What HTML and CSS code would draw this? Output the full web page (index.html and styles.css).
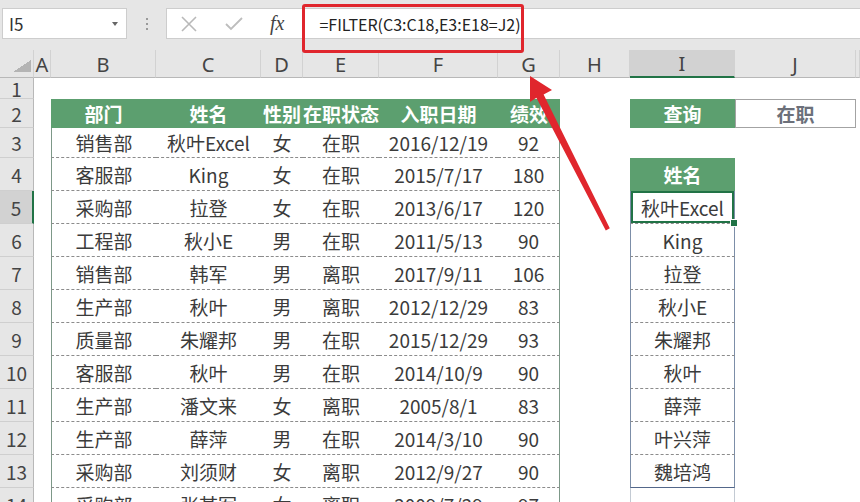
FILE: index.html
```html
<!DOCTYPE html>
<html lang="zh-CN">
<head>
  <meta charset="UTF-8">
  <title>FILTER</title>
  <link rel="stylesheet" href="styles.css">
</head>
<body>
  <div class="toolbar">
    <div class="namebox"><span class="name">I5</span><span class="caret"></span></div>
    <div class="grip"><i></i><i></i><i></i></div>
    <div class="fbar">
      <svg class="ico cancel" width="20" height="16" viewBox="0 0 20 16"><path d="M3 1 L17 15 M17 1 L3 15" stroke="#b9b9b9" stroke-width="1.6" fill="none"/></svg>
      <svg class="ico check" width="18" height="14" viewBox="0 0 18 14"><path d="M1 7 L6 12 L17 1" stroke="#bdbdbd" stroke-width="1.8" fill="none"/></svg>
      <span class="fx">fx</span>
      <span class="formula">=FILTER(C3:C18,E3:E18=J2)</span>
    </div>
  </div>

  <table class="sheet">
    <colgroup>
      <col class="w-rh"><col class="w-a"><col class="w-b"><col class="w-c"><col class="w-d"><col class="w-e"><col class="w-f"><col class="w-g"><col class="w-h"><col class="w-i"><col class="w-j"><col class="w-k">
    </colgroup>
    <tr class="hdr">
      <td class="corner"><span class="tri"></span></td>
      <td>A</td><td>B</td><td>C</td><td>D</td><td>E</td><td>F</td><td>G</td><td>H</td><td class="on">I</td><td>J</td><td></td>
    </tr>
    <tr class="r1">
      <td class="rh">1</td><td></td><td></td><td></td><td></td><td></td><td></td><td></td><td></td><td></td><td></td><td></td>
    </tr>
    <tr class="r2">
      <td class="rh">2</td><td></td>
      <td class="gh">部门</td><td class="gh">姓名</td><td class="gh">性别</td><td class="gh">在职状态</td><td class="gh">入职日期</td><td class="gh">绩效</td>
      <td></td><td class="gh">查询</td><td class="qv">在职</td><td></td>
    </tr>
    <tr class="r3">
      <td class="rh">3</td><td></td>
      <td class="d first">销售部</td><td class="d">秋叶Excel</td><td class="d">女</td><td class="d">在职</td><td class="d">2016/12/19</td><td class="d last">92</td>
      <td></td><td></td><td></td><td></td>
    </tr>
    <tr class="rn">
      <td class="rh">4</td><td></td>
      <td class="d first">客服部</td><td class="d">King</td><td class="d">女</td><td class="d">在职</td><td class="d">2015/7/17</td><td class="d last">180</td>
      <td></td><td class="gh">姓名</td><td></td><td></td>
    </tr>
    <tr class="rn">
      <td class="rh cur">5</td><td></td>
      <td class="d first">采购部</td><td class="d">拉登</td><td class="d">女</td><td class="d">在职</td><td class="d">2013/6/17</td><td class="d last">120</td>
      <td></td><td class="li sel">秋叶Excel</td><td></td><td></td>
    </tr>
    <tr class="rn">
      <td class="rh">6</td><td></td>
      <td class="d first">工程部</td><td class="d">秋小E</td><td class="d">男</td><td class="d">在职</td><td class="d">2011/5/13</td><td class="d last">90</td>
      <td></td><td class="li">King</td><td></td><td></td>
    </tr>
    <tr class="rn">
      <td class="rh">7</td><td></td>
      <td class="d first">销售部</td><td class="d">韩军</td><td class="d">男</td><td class="d">离职</td><td class="d">2017/9/11</td><td class="d last">106</td>
      <td></td><td class="li">拉登</td><td></td><td></td>
    </tr>
    <tr class="rn">
      <td class="rh">8</td><td></td>
      <td class="d first">生产部</td><td class="d">秋叶</td><td class="d">男</td><td class="d">离职</td><td class="d">2012/12/29</td><td class="d last">83</td>
      <td></td><td class="li">秋小E</td><td></td><td></td>
    </tr>
    <tr class="rn">
      <td class="rh">9</td><td></td>
      <td class="d first">质量部</td><td class="d">朱耀邦</td><td class="d">男</td><td class="d">在职</td><td class="d">2015/12/29</td><td class="d last">93</td>
      <td></td><td class="li">朱耀邦</td><td></td><td></td>
    </tr>
    <tr class="rn">
      <td class="rh">10</td><td></td>
      <td class="d first">客服部</td><td class="d">秋叶</td><td class="d">男</td><td class="d">在职</td><td class="d">2014/10/9</td><td class="d last">90</td>
      <td></td><td class="li">秋叶</td><td></td><td></td>
    </tr>
    <tr class="rn">
      <td class="rh">11</td><td></td>
      <td class="d first">生产部</td><td class="d">潘文来</td><td class="d">女</td><td class="d">离职</td><td class="d">2005/8/1</td><td class="d last">83</td>
      <td></td><td class="li">薛萍</td><td></td><td></td>
    </tr>
    <tr class="rn">
      <td class="rh">12</td><td></td>
      <td class="d first">生产部</td><td class="d">薛萍</td><td class="d">男</td><td class="d">在职</td><td class="d">2014/3/10</td><td class="d last">90</td>
      <td></td><td class="li">叶兴萍</td><td></td><td></td>
    </tr>
    <tr class="rn">
      <td class="rh">13</td><td></td>
      <td class="d first">采购部</td><td class="d">刘须财</td><td class="d">女</td><td class="d">离职</td><td class="d">2012/9/27</td><td class="d last">90</td>
      <td></td><td class="li end">魏培鸿</td><td></td><td></td>
    </tr>
    <tr class="rn">
      <td class="rh">14</td><td></td>
      <td class="d first">采购部</td><td class="d">张某军</td><td class="d">女</td><td class="d">离职</td><td class="d">2009/7/29</td><td class="d last">97</td>
      <td></td><td class="tail"></td><td></td><td></td>
    </tr>
  </table>

  <!-- annotations drawn over the sheet -->
  <div class="callout"></div>
  <svg class="arrow" width="860" height="502" viewBox="0 0 860 502">
    <polygon points="530,76 552,90 543.6,94.6 609.8,228.2 605.8,230.4 536.4,97.8 530,102" fill="#e0262d"/>
  </svg>
</body>
</html>
```

FILE: styles.css
```css
html, body {
  margin: 0;
  height: 100%;
  overflow: hidden;
  background-color: #ffffff;
}
body {
  position: relative;
  font-family: "Noto Sans CJK SC", sans-serif;
}

/* formula bar */
.toolbar {
  display: flex;
  align-items: flex-start;
  height: 50px;
  padding-top: 8px;
  box-sizing: border-box;
  background-color: #e6e6e6;
}
.namebox {
  display: flex;
  align-items: center;
  justify-content: space-between;
  width: 125px;
  height: 31px;
  margin-left: 2px;
  box-sizing: border-box;
  padding: 0 8px 0 6px;
  background-color: #fff;
  border: 1px solid #cdcdcd;
}
.name {
  font-size: 17px;
  color: #333;
}
.caret {
  width: 0;
  height: 0;
  border-left: 3px solid transparent;
  border-right: 3px solid transparent;
  border-top: 4px solid #666;
}
.grip {
  display: flex;
  flex-direction: column;
  gap: 3px;
  width: 39px;
  height: 31px;
  align-items: center;
  justify-content: center;
}
.grip i {
  width: 2px;
  height: 2px;
  background-color: #9a9a9a;
}
.fbar {
  flex: 1;
  display: flex;
  align-items: center;
  height: 31px;
  box-sizing: border-box;
  padding-left: 12px;
  background-color: #fff;
  border: 1px solid #cdcdcd;
  border-right: none;
}
.ico {
  display: block;
}
.cancel {
  margin-right: 26px;
}
.check {
  margin-right: 27px;
}
.fx {
  font-family: "Liberation Serif", serif;
  font-style: italic;
  font-size: 20px;
  color: #444;
  margin-right: 35px;
}
.formula {
  font-size: 16px;
  color: #222;
}

/* sheet */
.sheet {
  border-collapse: separate;
  border-spacing: 0;
  table-layout: fixed;
  width: 860px;
  font-size: 19px;
  color: #3b3b3b;
}
.sheet td {
  padding: 0;
  text-align: center;
  white-space: nowrap;
  overflow: hidden;
  line-height: 1;
}
.w-rh { width: 34px; }
.w-a { width: 17px; }
.w-b { width: 105px; }
.w-c { width: 105px; }
.w-d { width: 42px; }
.w-e { width: 76px; }
.w-f { width: 119px; }
.w-g { width: 62px; }
.w-h { width: 70px; }
.w-i { width: 105px; }
.w-j { width: 121px; }
.w-k { width: 4px; }

.hdr { height: 28px; }
.r1 { height: 21px; }
.r2 { height: 29px; }
.r3 { height: 30px; }
.rn { height: 33px; }

.hdr td {
  background-color: #e6e6e6;
  border-right: 1px solid #d2d2d2;
  border-bottom: 1px solid #b8b8b8;
  color: #444;
  font-size: 20px;
  font-family: "Noto Sans", sans-serif;
  vertical-align: bottom;
  padding-bottom: 2px;
}
.hdr td.on {
  background-color: #d2d2d2;
  border-bottom: 2px solid #217346;
}
.hdr td.corner {
  vertical-align: bottom;
  text-align: right;
  padding: 0 2px 2px 0;
}
.tri {
  display: inline-block;
  width: 18px;
  height: 12px;
  background: linear-gradient(to bottom right, transparent 50%, #b4b4b4 50%);
}
.sheet td.rh {
  background-color: #e6e6e6;
  border-right: 1px solid #b8b8b8;
  border-bottom: 1px solid #cfcfcf;
  color: #444;
  font-size: 19px;
  overflow: visible;
}
.sheet td.rh.cur {
  background-color: #d2d2d2;
  border-right: 2px solid #217346;
}

/* source table */
.gh {
  background-color: #5c9f6f;
  color: #fff;
  font-weight: bold;
}
.d {
  border-bottom: 1px dashed #8c8c8c;
}
.first {
  border-left: 1px solid #7d9888;
}
.last {
  border-right: 1px solid #7d9888;
}

/* lookup block */
.qv {
  background-color: #fff;
  border: 1px solid #a3a3a3;
  color: #6c707a;
  font-weight: bold;
}
.li {
  border-left: 1px solid #7c8ea8;
  border-right: 1px solid #7c8ea8;
  border-bottom: 1px dashed #8c8c8c;
}
.li.end {
  border-bottom: 1px solid #53678a;
}
.tail {
  border-left: 1px solid #c3cad3;
  border-right: 1px solid #c3cad3;
}
.sheet td.sel {
  position: relative;
  overflow: visible;
  box-shadow: inset 0 0 0 2px #217346;
}
.sel::after {
  content: "";
  position: absolute;
  right: -4px;
  bottom: -4px;
  width: 6px;
  height: 6px;
  background-color: #217346;
  border: 1px solid #fff;
}

/* annotations */
.callout {
  position: absolute;
  left: 302px;
  top: 4px;
  width: 222px;
  height: 49px;
  box-sizing: border-box;
  border: 3px solid #e0262d;
  border-radius: 3px;
}
.arrow {
  position: absolute;
  left: 0;
  top: 0;
  pointer-events: none;
}
```
